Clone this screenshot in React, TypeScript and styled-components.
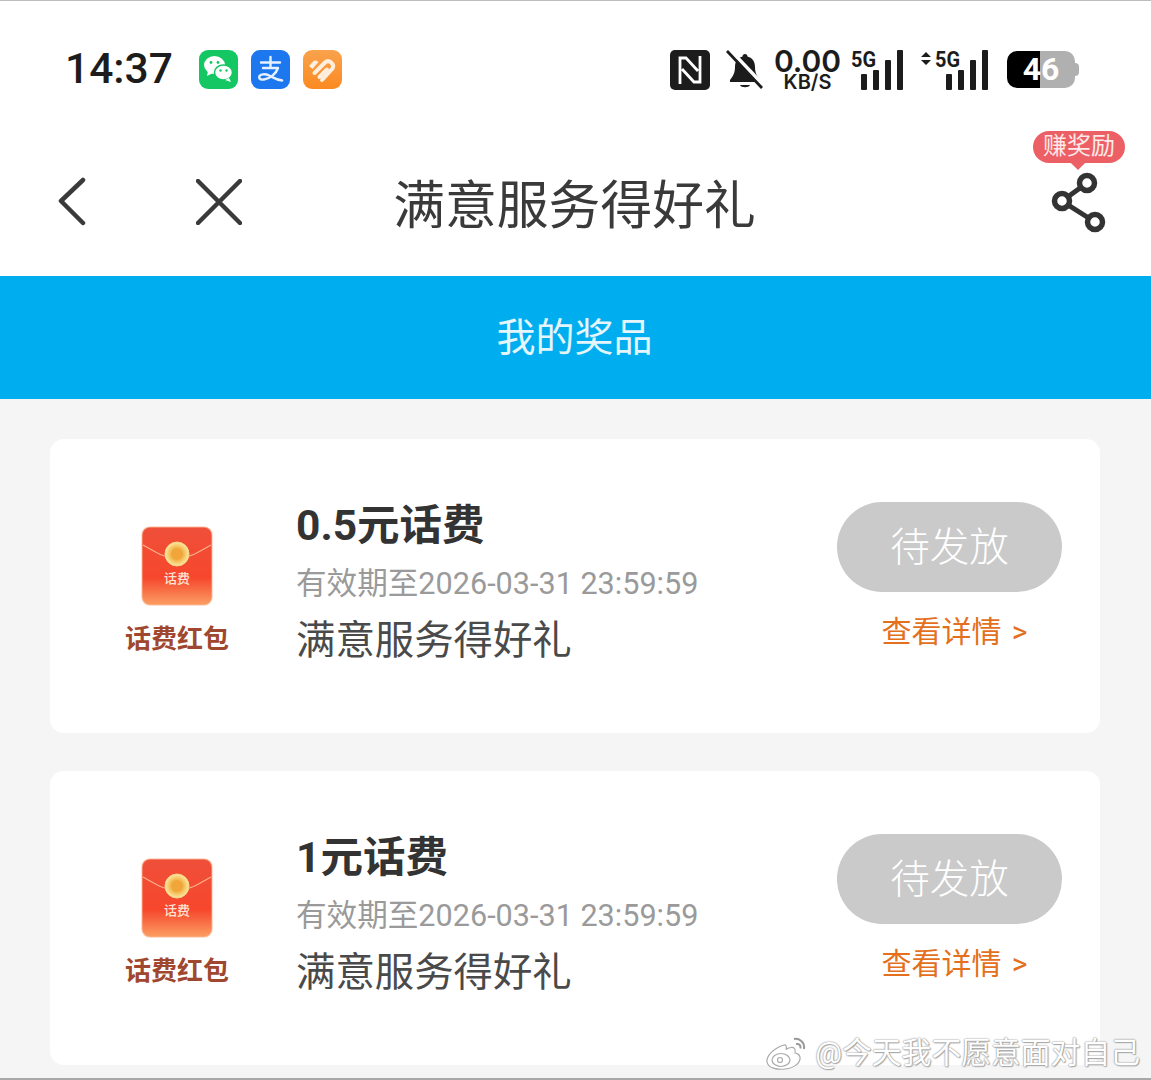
import React from "react";
import styled, { createGlobalStyle } from "styled-components";

const FONT = `Roboto, "Noto Sans CJK SC", "Noto Sans", sans-serif`;

const Global = createGlobalStyle`
  html, body { margin: 0; padding: 0; background: #fff; }
  body { font-family: ${FONT}; }
  * { box-sizing: border-box; }
`;

const Page = styled.div`
  position: relative;
  width: 1151px;
  height: 1080px;
  overflow: hidden;
  background: #f5f5f5;
  border-top: 1px solid #bdbdbd;
  border-bottom: 2px solid #a8a8a8;
`;

const StatusBar = styled.div`
  height: 119px;
  background: #fff;
  display: flex;
  align-items: center;
  padding: 18px 72px 0 65px;
`;

const Time = styled.div`
  font-size: 42.5px;
  font-weight: 500;
  color: #1c1c1c;
  line-height: 1;
  width: 134px;
`;

const AppIcons = styled.div`
  display: flex;
  gap: 13px;
`;

const StatusRight = styled.div`
  margin-left: auto;
  display: flex;
  align-items: center;
`;

const Speed = styled.div`
  width: 65px;
  margin: 0 11px;
  display: flex;
  flex-direction: column;
  align-items: center;
  color: #1c1c1c;
  font-family: Inter, Roboto, sans-serif;
  font-weight: 600;
  line-height: 1;
`;

const SpeedValue = styled.span`
  font-size: 30px;
  height: 25px;
  line-height: 25px;
  white-space: nowrap;
`;

const SpeedUnit = styled.span`
  font-size: 20px;
  height: 16px;
  line-height: 16px;
  white-space: nowrap;
`;

const SignalGap = styled.div`
  width: 17px;
`;

const SignalSvg = styled.svg`
  display: block;
  margin-top: -6px;
  font-family: Roboto, sans-serif;
`;

const Battery = styled.div`
  position: relative;
  width: 68px;
  height: 37px;
  margin-left: 19px;
  margin-right: 4px;
  border-radius: 10px;
  background: linear-gradient(90deg, #000 0 33px, #b0b0b0 33px);
  color: #fff;
  font-size: 32px;
  font-weight: 700;
  line-height: 37px;
  text-align: center;
  &::after {
    content: "";
    position: absolute;
    right: -4px;
    top: 12px;
    width: 4px;
    height: 13px;
    border-radius: 0 4px 4px 0;
    background: #b0b0b0;
  }
`;

const NavBar = styled.div`
  position: relative;
  height: 156px;
  background: #fff;
  display: flex;
  align-items: center;
  justify-content: center;
  padding: 18px 2px 0 0;
`;

const NavLeft = styled.div`
  position: absolute;
  left: 56px;
  top: 57px;
  display: flex;
  gap: 110px;
  align-items: center;
`;

const NavTitle = styled.h1`
  margin: 0;
  font-size: 51.8px;
  font-weight: 400;
  color: #3a3a3a;
  line-height: 64px;
`;

const ShareWrap = styled.div`
  position: absolute;
  left: 1033px;
  top: 11px;
  width: 92px;
  display: flex;
  flex-direction: column;
  align-items: center;
`;

const Badge = styled.div`
  position: relative;
  width: 92px;
  height: 32px;
  border-radius: 16px;
  background: #ec5f64;
  color: #fde9e9;
  font-size: 24px;
  line-height: 31px;
  text-align: center;
  font-weight: 400;
  &::after {
    content: "";
    position: absolute;
    left: 40px;
    bottom: -5px;
    width: 10px;
    height: 10px;
    background: #ec5f64;
    transform: rotate(45deg);
    z-index: 0;
  }
`;

const BadgeText = styled.span`
  position: relative;
  z-index: 1;
`;

const ShareSvg = styled.svg`
  margin: 6px 4px 0 0;
`;

const Banner = styled.div`
  height: 123px;
  background: #00aeef;
  color: #e4f5fc;
  display: flex;
  align-items: center;
  justify-content: center;
  font-size: 39px;
  font-weight: 400;
  padding: 0 2px 8px 0;
`;

const List = styled.div`
  padding: 40px 51px 0 50px;
  display: flex;
  flex-direction: column;
  gap: 38px;
`;

const Card = styled.div`
  height: 294px;
  background: #fff;
  border-radius: 14px;
  display: flex;
  align-items: center;
  padding-right: 38px;
`;

const Coupon = styled.div`
  width: 130px;
  margin: 0 54px 0 62px;
  display: flex;
  flex-direction: column;
  align-items: center;
  gap: 18px;
  padding-top: 8px;
`;

const CouponLabel = styled.div`
  font-size: 26px;
  font-weight: 700;
  line-height: 30px;
  color: #a0482f;
`;

const Info = styled.div`
  flex: 1;
  display: flex;
  flex-direction: column;
  padding-bottom: 4px;
`;

const Title = styled.div`
  font-size: 42.5px;
  font-weight: 700;
  line-height: 50px;
  color: #333;
`;

const Expiry = styled.div`
  margin-top: 13px;
  font-size: 30.6px;
  line-height: 40px;
  color: #9a9a9a;
`;

const PrizeName = styled.div`
  margin-top: 11px;
  font-size: 39.4px;
  font-weight: 400;
  line-height: 52px;
  color: #4a4a4a;
`;

const Actions = styled.div`
  width: 225px;
  display: flex;
  flex-direction: column;
  align-items: center;
  gap: 20px;
  padding-bottom: 18px;
`;

const StatusPill = styled.div`
  width: 225px;
  height: 90px;
  border-radius: 45px;
  background: #cacaca;
  color: #fff;
  font-size: 39.6px;
  font-weight: 300;
  display: flex;
  align-items: center;
  justify-content: center;
  padding-bottom: 7px;
`;

const DetailLink = styled.div`
  font-size: 30px;
  line-height: 40px;
  font-weight: 400;
  color: #e46f1c;
  white-space: pre;
  word-spacing: 3px;
  padding-left: 10px;
`;

const Watermark = styled.div`
  position: absolute;
  right: 11px;
  bottom: 7px;
  display: flex;
  align-items: center;
  gap: 4px;
`;

const WatermarkText = styled.span`
  font-size: 29.8px;
  font-weight: 400;
  line-height: 36px;
  color: #fff;
  white-space: nowrap;
  text-shadow: 0 0 1px #8e8e8e, 0 0 2px #9a9a9a, 1px 1px 1px #b0b0b0;
`;

const WeChat = () => (
  <svg width="39" height="39" viewBox="0 0 39 39">
    <rect width="39" height="39" rx="9" fill="#14c763" />
    <ellipse cx="15.500" cy="15" rx="10.500" ry="9" fill="#fff" />
    <path d="M9 21l-1 5 6-3z" fill="#fff" />
    <ellipse cx="24.500" cy="22.500" rx="9" ry="7.500" fill="#fff" stroke="#14c763" strokeWidth="1.500" />
    <path d="M30 28l2 4-6-2z" fill="#fff" />
    <circle cx="12" cy="12.500" r="1.400" fill="#14c763" />
    <circle cx="19" cy="12.500" r="1.400" fill="#14c763" />
    <circle cx="21.500" cy="20.500" r="1.200" fill="#14c763" />
    <circle cx="27.500" cy="20.500" r="1.200" fill="#14c763" />
  </svg>
);

const Alipay = () => (
  <svg width="39" height="39" viewBox="0 0 39 39" fill="none">
    <rect width="39" height="39" rx="9" fill="#1d77ee" />
    <path d="M10 12.500h19M19.500 7v11M12 18h15c-2 6-8 10.500-14 11.500-3 .5-5-.5-4.800-2.500.3-3 6-3.500 10-1.500 4 2 7 4.500 13 5" stroke="#e6f1ff" strokeWidth="2.400" strokeLinecap="round" strokeLinejoin="round" />
  </svg>
);

const Heart = () => (
  <svg width="39" height="39" viewBox="0 0 39 39" fill="none">
    <defs>
      <linearGradient id="hg" x1="0" y1="0" x2="0" y2="1">
        <stop offset="0" stopColor="#f9a24c" />
        <stop offset="1" stopColor="#fb8a22" />
      </linearGradient>
    </defs>
    <rect width="39" height="39" rx="9" fill="url(#hg)" />
    <path d="M6 16l4.500-5c1.500-1 3.500-.5 5 1l-6 7z" fill="#fdeede" />
    <path d="M11.500 23L22 12.500c4-3.500 10 1.500 7.500 6L19 30" stroke="#fdeede" strokeWidth="4" strokeLinecap="round" strokeLinejoin="round" />
    <path d="M16.500 27L24 19.500" stroke="#fdeede" strokeWidth="4" strokeLinecap="round" />
  </svg>
);

const Nfc = () => (
  <svg width="40" height="40" viewBox="0 0 40 40" fill="none">
    <rect width="40" height="40" rx="5" fill="#1c1c1c" />
    <path d="M10 34V8h6l12 13M30 6v26h-6L12 19" stroke="#fff" strokeWidth="2.800" />
  </svg>
);

const BellSvg = styled.svg`
  margin-left: 16px;
`;

const BellOff = () => (
  <BellSvg width="38" height="40" viewBox="0 0 38 40" fill="none">
    <path d="M19 4c-1.500 0-2.500 1-2.500 2.500C11 8 9 12 9 17c0 6-2 9-5 13v2h30v-2c-3-4-5-7-5-13 0-5-2-9-7.500-10.500C21.500 5 20.500 4 19 4z" fill="#1c1c1c" />
    <path d="M14 35c1 3 9 3 10 0z" fill="#1c1c1c" />
    <path d="M3 -1l35 37" stroke="#fff" strokeWidth="4" />
    <path d="M1 1l35 37" stroke="#1c1c1c" strokeWidth="2.800" />
  </BellSvg>
);

const Signal = ({ arrows, width }: { arrows?: boolean; width: number }) => (
  <SignalSvg width={width} height="46" viewBox={`0 -6 ${width} 46`}>
    {arrows && <path d="M1 7l5-5 5 5zM1 10l5 5 5-5z" fill="#1c1c1c" />}
    <text
      x={arrows ? 15 : 0}
      y="17"
      fontSize="22"
      fontWeight="700"
      fill="#1c1c1c"
      textLength="25"
      lengthAdjust="spacingAndGlyphs"
    >
      5G
    </text>
    {[24, 20, 10, 0].map((y, i) => (
      <rect key={i} x={width - 42 + i * 12} y={y} width="6" height={40 - y} rx="1" fill="#1c1c1c" />
    ))}
  </SignalSvg>
);

const BackIcon = () => (
  <svg width="30" height="50" viewBox="0 0 30 50" fill="none">
    <path d="M27 3L5 24l22 22" stroke="#3a3a3a" strokeWidth="4.500" strokeLinecap="round" strokeLinejoin="round" />
  </svg>
);

const CloseIcon = () => (
  <svg width="46" height="46" viewBox="0 0 46 46" fill="none">
    <path d="M2 2l42 42M44 2L2 44" stroke="#3a3a3a" strokeWidth="4.500" strokeLinecap="round" />
  </svg>
);

const ShareIcon = () => (
  <ShareSvg width="58" height="64" viewBox="0 0 58 64" fill="none">
    <path d="M39 14L14 32l33 21" stroke="#333" strokeWidth="5" />
    <circle cx="39" cy="14" r="7.500" fill="#fff" stroke="#333" strokeWidth="5.500" />
    <circle cx="14" cy="32" r="7.500" fill="#fff" stroke="#333" strokeWidth="5.500" />
    <circle cx="47" cy="53" r="7.500" fill="#fff" stroke="#333" strokeWidth="5.500" />
  </ShareSvg>
);

const Envelope = ({ id }: { id: string }) => (
  <svg width="72" height="80" viewBox="0 0 72 80" fill="none">
    <defs>
      <linearGradient id={`env${id}`} x1="0" y1="0" x2="0" y2="1">
        <stop offset="0" stopColor="#ef4f3a" />
        <stop offset="0.65" stopColor="#f6472d" />
        <stop offset="1" stopColor="#fb9e63" />
      </linearGradient>
      <radialGradient id={`coin${id}`}>
        <stop offset="0" stopColor="#f2b544" />
        <stop offset="0.55" stopColor="#f3b94d" />
        <stop offset="1" stopColor="#fbe9a8" />
      </radialGradient>
    </defs>
    <rect x="1" y="1" width="70" height="78" rx="8" fill={`url(#env${id})`} stroke="#fbb795" strokeOpacity="0.6" strokeWidth="1.500" />
    <path d="M2 19c12 7 22 13 34 14 12-1 22-7 34-14" stroke="#fbb08a" strokeWidth="1.200" />
    <circle cx="36" cy="28" r="12" fill={`url(#coin${id})`} stroke="#f7d77f" strokeWidth="1" />
    <circle cx="36" cy="28" r="6" fill="#f0a63b" />
    <text x="36" y="57" textAnchor="middle" fontSize="13" fontWeight="500" fill="#fde4d2">话费</text>
  </svg>
);

const WeiboLogo = () => (
  <svg width="46" height="36" viewBox="0 0 46 36" fill="none" stroke="#aaa" strokeWidth="1.200">
    <path d="M19 10C9 13 1 21 2 27c1 6 10 8 18 7 9-1 16-6 15-12-.5-3-4-4-5-4 1-4-1-6-4-5.500-2 .3-4 1-5 2 1-3 0-5-2-4.500z" fill="#fff" />
    <ellipse cx="16" cy="25" rx="9" ry="6.500" />
    <circle cx="15" cy="25" r="2.500" />
    <path d="M29 4c5-1 11 3 10 10M31 9c3-.5 5 1 4.500 4.500" stroke="#999" strokeWidth="2" />
  </svg>
);

const prizes = [
  { id: "a", title: "0.5元话费" },
  { id: "b", title: "1元话费" },
];

export default function App() {
  return (
    <Page>
      <Global />
      <StatusBar>
        <Time>14:37</Time>
        <AppIcons>
          <WeChat />
          <Alipay />
          <Heart />
        </AppIcons>
        <StatusRight>
          <Nfc />
          <BellOff />
          <Speed>
            <SpeedValue>0.00</SpeedValue>
            <SpeedUnit>KB/S</SpeedUnit>
          </Speed>
          <Signal width={52} />
          <SignalGap />
          <Signal arrows width={68} />
          <Battery>46</Battery>
        </StatusRight>
      </StatusBar>
      <NavBar>
        <NavLeft>
          <BackIcon />
          <CloseIcon />
        </NavLeft>
        <NavTitle>满意服务得好礼</NavTitle>
        <ShareWrap>
          <Badge>
            <BadgeText>赚奖励</BadgeText>
          </Badge>
          <ShareIcon />
        </ShareWrap>
      </NavBar>
      <Banner>我的奖品</Banner>
      <List>
        {prizes.map((p) => (
          <Card key={p.id}>
            <Coupon>
              <Envelope id={p.id} />
              <CouponLabel>话费红包</CouponLabel>
            </Coupon>
            <Info>
              <Title>{p.title}</Title>
              <Expiry>有效期至2026-03-31 23:59:59</Expiry>
              <PrizeName>满意服务得好礼</PrizeName>
            </Info>
            <Actions>
              <StatusPill>待发放</StatusPill>
              <DetailLink>查看详情 &gt;</DetailLink>
            </Actions>
          </Card>
        ))}
      </List>
      <Watermark>
        <WeiboLogo />
        <WatermarkText>@今天我不愿意面对自己</WatermarkText>
      </Watermark>
    </Page>
  );
}
